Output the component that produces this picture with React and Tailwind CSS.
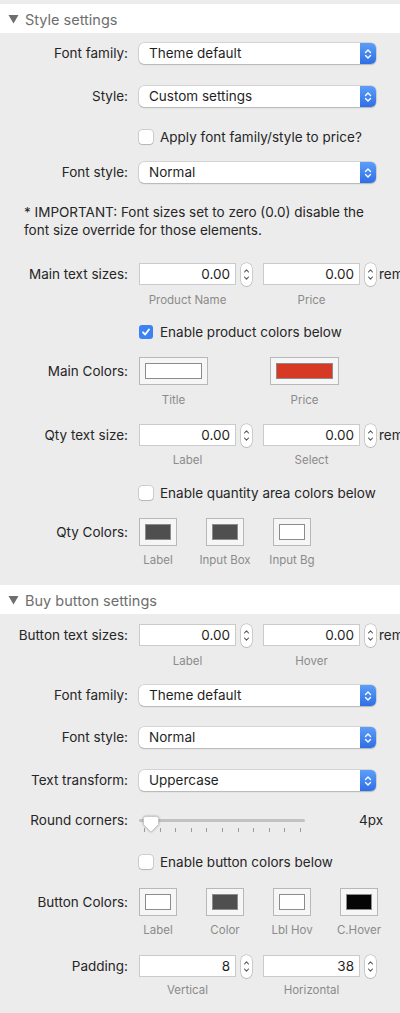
import React from 'react';

const Label = ({ children, top }) => (
    <div className={`w-[128px] shrink-0 text-right text-[13.5px] text-[#262626] whitespace-nowrap ${top ? 'self-start leading-[22px]' : ''}`}>
        {children}
    </div>
);

const Header = ({ title, className = '' }) => (
    <div className={`flex h-[29px] items-center bg-white pl-[8px] ${className}`}>
        <svg width="11" height="10" viewBox="0 0 11 10" className="mr-[6px] mt-[1px]">
            <polygon points="0.5,1 10.5,1 5.5,9.5" fill="#6e6e6e" />
        </svg>
        <span className="mt-[2px] text-[14.5px] text-[#6e6e6e]">{title}</span>
    </div>
);

const Select = ({ value }) => (
    <div className="flex h-[21px] w-[237px] items-center rounded-[5px] bg-white shadow-[0_0_0_0.5px_rgba(0,0,0,0.2),0_1px_1.5px_rgba(0,0,0,0.15)]">
        <span className="flex-1 pl-[10px] text-[13.5px] text-[#1f1f1f]">{value}</span>
        <div className="flex h-full w-[16px] items-center justify-center rounded-r-[5px] bg-gradient-to-b from-[#5c9ef8] to-[#2f6ee5]">
            <svg width="8" height="12" viewBox="0 0 8 12" fill="none" stroke="white" strokeWidth="1.4" strokeLinecap="round" strokeLinejoin="round">
                <path d="M1.5 4.5 L4 2 L6.5 4.5" />
                <path d="M1.5 7.5 L4 10 L6.5 7.5" />
            </svg>
        </div>
    </div>
);

const NumField = ({ value }) => (
    <div className="flex items-center">
        <div className="h-[22px] w-[97px] border border-[#cbcbcb] bg-white pr-[5px] text-right text-[13.5px] leading-[20px] text-[#1f1f1f]">
            {value}
        </div>
        <div className="ml-[5px] flex h-[23px] w-[11px] items-center justify-center rounded-full bg-white shadow-[0_0_0_0.5px_rgba(0,0,0,0.25),0_1px_1px_rgba(0,0,0,0.12)]">
            <svg width="7" height="15" viewBox="0 0 7 15" fill="none" stroke="#555" strokeWidth="1.1" strokeLinecap="round" strokeLinejoin="round">
                <path d="M1.5 5 L3.5 2.8 L5.5 5" />
                <path d="M1.5 10 L3.5 12.2 L5.5 10" />
            </svg>
        </div>
    </div>
);

const NumRow = ({ label, a, b, rem = true, className = '' }) => (
    <div className={`flex h-[22px] items-center ${className}`}>
        <Label>{label}</Label>
        <div className="ml-[11px] flex items-center gap-[11px]">
            <NumField value={a} />
            <NumField value={b} />
        </div>
        {rem && <span className="ml-[3px] whitespace-nowrap text-[13.5px] text-[#262626]">rem</span>}
    </div>
);

// sub-captions sit a couple of px low inside their fixed-height strip
const SubLabels = ({ items, width, gap, className = '' }) => (
    <div className={`ml-[139px] flex h-[14px] items-start pt-[1px] ${className}`} style={{ gap }}>
        {items.map((t) => (
            <div key={t} className="flex justify-center whitespace-nowrap text-[11.5px] leading-[14px] text-[#8b8b8b]" style={{ width }}>
                {t}
            </div>
        ))}
    </div>
);

const Checkbox = ({ label, checked, className = '' }) => (
    <div className={`flex h-[14px] items-center pl-[139px] ${className}`}>
        {checked ? (
            <div className="flex h-[14px] w-[14px] items-center justify-center rounded-[3px] bg-[#3d82f5]">
                <svg width="10" height="10" viewBox="0 0 10 10" fill="none" stroke="white" strokeWidth="1.8" strokeLinecap="round" strokeLinejoin="round">
                    <path d="M2 5.3 L4.2 7.5 L8 2.5" />
                </svg>
            </div>
        ) : (
            <div className="h-[14px] w-[14px] rounded-[3px] bg-white shadow-[0_0_0_0.5px_rgba(0,0,0,0.25),0_1px_1px_rgba(0,0,0,0.12)]" />
        )}
        <span className="ml-[7px] text-[13.5px] text-[#262626]">{label}</span>
    </div>
);

const Well = ({ color, wide }) => (
    <div className={`flex h-[28px] items-center justify-center border border-[#b8b8b8] bg-[#f6f6f6] ${wide ? 'w-[69px]' : 'w-[38px]'}`}>
        <div className={`h-[16px] border border-[#8c8c8c] ${wide ? 'w-[57px]' : 'w-[26px]'}`} style={{ background: color }} />
    </div>
);

const SelectRow = ({ label, value, className = '' }) => (
    <div className={`flex h-[21px] items-center ${className}`}>
        <Label>{label}</Label>
        <div className="ml-[11px]">
            <Select value={value} />
        </div>
    </div>
);

const App = () => {
    const ticks = Array.from({ length: 11 });
    return (
        <div className="min-h-[1013px] w-[400px] overflow-hidden bg-[#ececec] pt-[4px] font-['Inter',sans-serif]">
            <Header title="Style settings" />

            <SelectRow label="Font family:" value="Theme default" className="mt-[10px]" />
            <SelectRow label="Style:" value="Custom settings" className="mt-[22px]" />
            <Checkbox label="Apply font family/style to price?" className="mt-[23px]" />
            <SelectRow label="Font style:" value="Normal" className="mt-[18px]" />

            <p className="mt-[20px] px-[24px] text-[13.5px] leading-[18px] text-[#262626]">
                * IMPORTANT: Font sizes set to zero (0.0) disable the font size override for those elements.
            </p>

            <NumRow label="Main text sizes:" a="0.00" b="0.00" className="mt-[24px]" />
            <SubLabels items={['Product Name', 'Price']} width={97} gap={27} className="mt-[7px]" />

            <Checkbox label="Enable product colors below" checked className="mt-[19px]" />

            <div className="mt-[18px] flex h-[28px] items-center">
                <Label>Main Colors:</Label>
                <div className="ml-[11px] flex gap-[62px]">
                    <Well color="#ffffff" wide />
                    <Well color="#d63a24" wide />
                </div>
            </div>
            <SubLabels items={['Title', 'Price']} width={69} gap={62} className="mt-[7px]" />

            <NumRow label="Qty text size:" a="0.00" b="0.00" className="mt-[18px]" />
            <SubLabels items={['Label', 'Select']} width={97} gap={27} className="mt-[6px]" />

            <Checkbox label="Enable quantity area colors below" className="mt-[20px]" />

            <div className="mt-[18px] flex h-[28px] items-center">
                <Label>Qty Colors:</Label>
                <div className="ml-[11px] flex gap-[29px]">
                    <Well color="#4f4f4f" />
                    <Well color="#4f4f4f" />
                    <Well color="#ffffff" />
                </div>
            </div>
            <SubLabels items={['Label', 'Input Box', 'Input Bg']} width={38} gap={29} className="mt-[6px]" />

            <Header title="Buy button settings" className="mt-[19px]" />

            <NumRow label="Button text sizes:" a="0.00" b="0.00" className="mt-[10px]" />
            <SubLabels items={['Label', 'Hover']} width={97} gap={27} className="mt-[7px]" />

            <SelectRow label="Font family:" value="Theme default" className="mt-[18px]" />
            <SelectRow label="Font style:" value="Normal" className="mt-[21px]" />
            <SelectRow label="Text transform:" value="Uppercase" className="mt-[22px]" />

            <div className="mt-[18px] flex h-[23px]">
                <Label top>Round corners:</Label>
                <div className="relative ml-[11px] flex w-[166px] flex-col pt-[10px]">
                    <div className="h-[3px] rounded-full bg-[#c2c2c2]" />
                    <div className="ml-[5px] mt-[6px] flex w-[157px] justify-between">
                        {ticks.map((_, i) => (
                            <div key={i} className="h-[4px] w-[1px] bg-[#9a9a9a]" />
                        ))}
                    </div>
                    <svg width="16" height="17" viewBox="0 0 16 17" className="absolute left-[4px] top-[7px] drop-shadow-[0_0.5px_1px_rgba(0,0,0,0.35)]">
                        <path d="M2.5 0.5 H13.5 Q15.5 0.5 15.5 2.5 V8.5 L8 16 L0.5 8.5 V2.5 Q0.5 0.5 2.5 0.5 Z" fill="white" stroke="#bdbdbd" strokeWidth="0.6" />
                    </svg>
                </div>
                <span className="ml-[54px] self-start text-[13.5px] leading-[22px] text-[#262626]">4px</span>
            </div>

            <Checkbox label="Enable button colors below" className="mt-[23px]" />

            <div className="mt-[19px] flex h-[28px] items-center">
                <Label>Button Colors:</Label>
                <div className="ml-[11px] flex gap-[29px]">
                    <Well color="#ffffff" />
                    <Well color="#4f4f4f" />
                    <Well color="#ffffff" />
                    <Well color="#050505" />
                </div>
            </div>
            <SubLabels items={['Label', 'Color', 'Lbl Hov', 'C.Hover']} width={38} gap={29} className="mt-[6px]" />

            <NumRow label="Padding:" a="8" b="38" rem={false} className="mt-[19px]" />
            <SubLabels items={['Vertical', 'Horizontal']} width={97} gap={27} className="mt-[5px]" />
        </div>
    );
};

export default App;
